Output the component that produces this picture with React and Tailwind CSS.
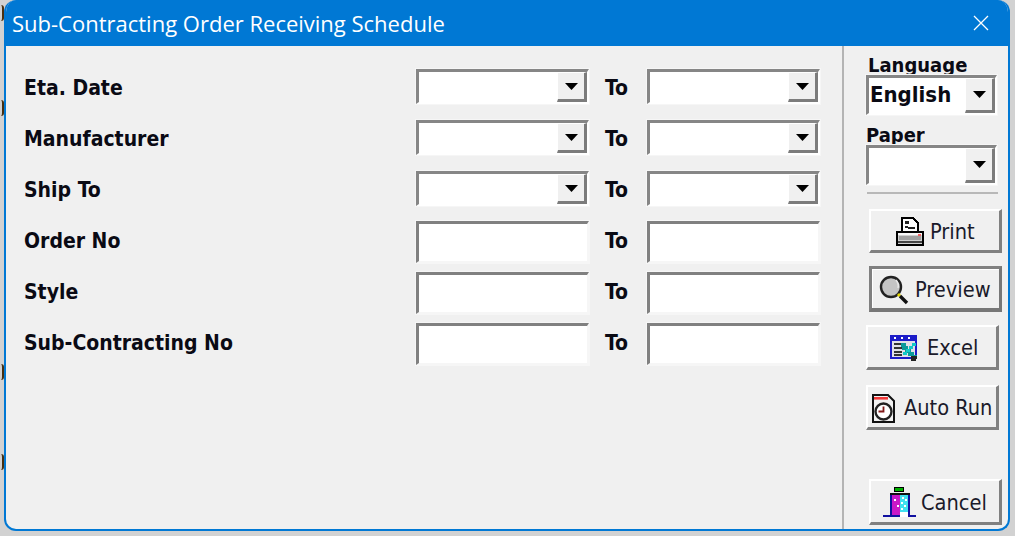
import React from "react";

const sans = "font-['DejaVu_Sans_Condensed','DejaVu_Sans',sans-serif]";

function Arrow() {
  return (
    <svg width="13" height="7" viewBox="0 0 13 7" className="block">
      <polygon points="0,0 13,0 6.5,7" fill="#000" />
    </svg>
  );
}

function Sunken({ className = "", children }) {
  return (
    <div className={"box-border bg-white border-solid border-t-[3px] border-l-[3px] border-r-[2px] border-b-[2px] border-t-[#808080] border-l-[#808080] border-r-[#f6f6f6] border-b-[#f6f6f6] shadow-[0_0_0_1px_#f6f6f6] " + className}>
      {children}
    </div>
  );
}

function Combo({ w = "w-[173px]", h = "h-[35px]", btn = "w-[30px]", children }) {
  return (
    <div className={"box-border flex border-solid border-t-[3px] border-l-[3px] border-r-[2px] border-b-[2px] border-t-[#868686] border-l-[#868686] border-r-white border-b-white bg-white shadow-[0_0_0_1px_#f6f6f6] " + w + " " + h}>
      <div className="flex-1 min-w-0 flex items-center overflow-hidden">{children}</div>
      <div className={"box-border flex items-center justify-center bg-[#f0f0f0] border-solid border-t-[1px] border-l-[1px] border-r-[3px] border-b-[3px] border-t-[#ffffff] border-l-[#ffffff] border-r-[#7c7c7c] border-b-[#7c7c7c] " + btn}>
        <Arrow />
      </div>
    </div>
  );
}

function Raised({ className = "", strong = false, children }) {
  const edge = strong
    ? "border-t-[3px] border-l-[3px] border-t-[#808080] border-l-[#808080] shadow-[inset_1px_1px_0_#fff] border-r-[3px] border-b-[4px] border-r-[#777777] border-b-[#777777]"
    : "border-t-[2px] border-l-[2px] border-t-white border-l-white border-r-[3px] border-b-[3px] border-r-[#808080] border-b-[#808080]";
  return (
    <button className={"box-border border-solid bg-[#f0f0f0] flex items-center overflow-hidden whitespace-nowrap pt-[2px] text-[21.6px] leading-none text-[#1a1a2a] " + sans + " " + edge + " " + className}>
      {children}
    </button>
  );
}

function PrintIcon() {
  return (
    <svg width="28" height="29" viewBox="0 0 28 29" className="block shrink-0" shapeRendering="crispEdges">
      <path d="M6 1h11l5 5v9H6z" fill="#fff" stroke="#000" strokeWidth="2" />
      <path d="M9 4h4v3H9zM9 9h3v2H9zM12 10h7v2h-7z" fill="#222" />
      <path d="M1 15h26v13H1z" fill="#cfcfcf" stroke="#000" strokeWidth="2" />
      <path d="M2 16h24v2H2z" fill="#f8f8f8" />
      <path d="M3 19h22v4H3z" fill="#a0a0a0" />
      <path d="M22 17h3v2h-3z" fill="#f06060" />
      <path d="M2 24h24v2H2z" fill="#444" />
    </svg>
  );
}

function PreviewIcon() {
  return (
    <svg width="30" height="30" viewBox="0 0 30 30" className="block shrink-0">
      <circle cx="12" cy="12" r="10" fill="#c4c4c4" stroke="#222" strokeWidth="2.4" />
      <path d="M17 5a9 9 0 0 1 2 8" fill="none" stroke="#e8e8e8" strokeWidth="1.5" />
      <path d="M19 19l2 2" stroke="#e6d800" strokeWidth="3" />
      <path d="M21 21l7 7" stroke="#111" strokeWidth="3.4" />
    </svg>
  );
}

function ExcelIcon() {
  return (
    <svg width="29" height="26" viewBox="0 0 29 26" className="block shrink-0" shapeRendering="crispEdges">
      <path d="M0 0h27v24H0z" fill="#1c1cc8" />
      <path d="M2 6h23v16H2z" fill="#e0e0e8" />
      <path d="M4 2h2v2H4zM11 2h2v2h-2zM18 2h2v2h-2z" fill="#fff" />
      <path d="M4 8h9v2H4zM4 12h8v2H4zM4 16h8v2H4zM4 19h8v2H4z" fill="#333" />
      <path d="M11 8h5v3h2v3h3v3h3v3h3v4h-6v-3h-3v-3h-3v-3h-3v-3h-1z" fill="#0a9a9a" />
      <path d="M22 8h4v3h-3v3h-3v3h-3v3h-4v-3h3v-3h3v-3h3z" fill="#12c8c8" />
      <path d="M21 21h6v3h-1v2h-5z" fill="#222" />
    </svg>
  );
}

function AutoIcon() {
  return (
    <svg width="23" height="29" viewBox="0 0 23 29" className="block shrink-0">
      <path d="M1 1h15l6 6v21H1z" fill="#f2f2f2" stroke="#111" strokeWidth="2" />
      <path d="M2 3h14v2.6H2z" fill="#f03838" />
      <circle cx="11.5" cy="17.5" r="8" fill="#fff" stroke="#222" strokeWidth="2.4" />
      <path d="M11.5 12.5v5h-5" fill="none" stroke="#801818" strokeWidth="1.8" />
    </svg>
  );
}

function CancelIcon() {
  return (
    <svg width="33" height="32" viewBox="0 0 33 32" className="block shrink-0" shapeRendering="crispEdges">
      <path d="M11 0h10v5H11z" fill="#000" />
      <path d="M12 1h8v3h-8z" fill="#00b000" />
      <path d="M7 6h20v2H7z" fill="#111" />
      <path d="M9 8h8v20H9z" fill="#c818c8" />
      <path d="M17 8h8v17h-8z" fill="#40e0f0" />
      <path d="M19 10h2v2h-2zM22 12h2v2h-2zM18 15h2v2h-2zM21 18h2v2h-2zM11 12h2v2h-2zM14 18h2v2h-2zM18 21h2v2h-2z" fill="#fff" />
      <path d="M7 8h2v20H7zM25 8h2v20h-2z" fill="#1010a0" />
      <path d="M0 28h17v2H0zM25 28h8v2h-8z" fill="#1010a0" />
      <path d="M17 25h8v5h-8z" fill="#fff" />
    </svg>
  );
}

function Row({ label, children }) {
  return (
    <div className="flex items-center h-[35px] mb-[16px]">
      <div className={"w-[392px] pt-[3px] font-bold text-[#0a0a14] text-[21px] leading-none whitespace-nowrap " + sans}>{label}</div>
      {children}
    </div>
  );
}

function To() {
  return <div className={"w-[58px] pl-[16px] pt-[3px] font-bold text-[21px] leading-none text-[#0a0a14] " + sans}>To</div>;
}

function BackGlyph({ className }) {
  return <div className={"w-[4px] h-[16px] rounded-r-[3px] border-r-[2px] border-solid border-r-[#4a3010] " + className} />;
}

const comboRows = ["Eta. Date", "Manufacturer", "Ship To"];
const inputRows = ["Order No", "Style", "Sub-Contracting No"];

export default function App() {
  return (
    <div className="w-[1015px] h-[536px] overflow-hidden bg-[#d2d2d2] box-border pr-[5px] pb-[5px] flex">
      <div className="w-[4px] shrink-0 flex flex-col">
        <BackGlyph className="mt-[5px]" />
        <BackGlyph className="mt-[79px]" />
        <BackGlyph className="mt-[248px]" />
        <BackGlyph className="mt-[74px]" />
      </div>
      <div className="flex-1 min-w-0 flex flex-col rounded-t-[12px] rounded-b-[12px] overflow-hidden border-solid border-[2px] border-t-0 border-[#0078d4] bg-[#f0f0f0]">
        <div className="h-[46px] shrink-0 bg-[#0078d4] flex items-center justify-between pl-[6px] pr-[19px] pb-[1px]">
          <div className="text-white text-[22px] leading-none font-['Open_Sans',sans-serif] whitespace-nowrap">Sub-Contracting Order Receiving Schedule</div>
          <svg width="16" height="16" viewBox="0 0 16 16" className="block">
            <path d="M1 1l14 14M15 1L1 15" stroke="#fff" strokeWidth="1.3" fill="none" />
          </svg>
        </div>
        <div className="flex-1 min-h-0 flex">
          <div className="w-[836px] shrink-0 box-border pl-[18px] pt-[23px]">
            {comboRows.map((l) => (
              <Row key={l} label={l}>
                <Combo />
                <To />
                <Combo />
              </Row>
            ))}
            {inputRows.map((l) => (
              <Row key={l} label={l}>
                <Sunken className="w-[173px] h-[42px] mt-[4px]" />
                <To />
                <Sunken className="w-[173px] h-[42px] mt-[4px]" />
              </Row>
            ))}
          </div>
          <div className="flex-1 min-w-0 border-l-[2px] border-solid border-l-[#b4b4b4] box-border pl-[22px] pr-[10px] flex flex-col items-start">
            <div className={"h-[21px] mt-[8px] overflow-hidden font-bold text-[20px] leading-[22px] text-[#0a0a14] pl-[2px] " + sans}>Language</div>
            <Combo w="w-[131px]" h="h-[40px]" btn="w-[30px]">
              <span className={"pl-[1px] pb-[2px] font-bold text-[22px] leading-none text-[#0a0a14] " + sans}>English</span>
            </Combo>
            <div className={"h-[21px] mt-[9px] overflow-hidden font-bold text-[20px] leading-[22px] text-[#0a0a14] " + sans}>Paper</div>
            <Combo w="w-[131px]" h="h-[40px]" btn="w-[30px]" />
            <div className="w-[131px] h-[2px] bg-[#b8b8b8] mt-[7px] ml-[1px]" />
            <Raised className="w-[133px] h-[44px] mt-[15px] ml-[3px] pl-[25px] gap-[6px]"><PrintIcon />Print</Raised>
            <Raised strong className="w-[133px] h-[46px] mt-[13px] ml-[3px] pl-[7px] gap-[6px]"><PreviewIcon />Preview</Raised>
            <Raised className="w-[133px] h-[45px] mt-[13px] pl-[22px] gap-[8px]"><ExcelIcon />Excel</Raised>
            <Raised className="w-[133px] h-[45px] mt-[15px] pl-[4px] gap-[9px]"><AutoIcon />Auto Run</Raised>
            <Raised className="w-[133px] h-[46px] mt-[49px] ml-[3px] pl-[12px] gap-[5px]"><CancelIcon />Cancel</Raised>
          </div>
        </div>
      </div>
    </div>
  );
}
